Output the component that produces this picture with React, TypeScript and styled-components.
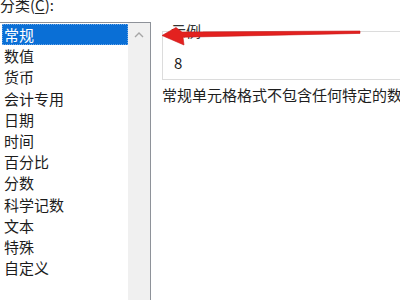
import React from "react"
import styled, { createGlobalStyle } from "styled-components"

const GlobalStyle = createGlobalStyle`
  html, body {
    margin: 0;
    padding: 0;
    background: #ffffff;
    overflow: hidden;
  }
  body {
    font-family: "Noto Sans CJK SC", "Liberation Sans", sans-serif;
    font-size: 15px;
    color: #1a1a1a;
  }
`

const Page = styled.div`
  position: relative;
  width: 400px;
  height: 300px;
  display: flex;
  gap: 11px;
  overflow: hidden;
`

const LeftColumn = styled.div`
  width: 151px;
  flex-shrink: 0;
  display: flex;
  flex-direction: column;
`

const FieldLabel = styled.div`
  margin-top: -5px;
  height: 20px;
  line-height: 20px;
  margin-bottom: 7px;
  color: #222;
  white-space: nowrap;
  u {
    text-decoration: underline;
    text-underline-offset: 2px;
  }
`

const ListBox = styled.div`
  flex: 1;
  display: flex;
  border: 1px solid #8e9299;
  border-bottom: none;
  margin-left: -1px;
`

const Items = styled.ul`
  list-style: none;
  margin: 0;
  padding: 1px 0 0 2px;
  flex: 1;
`

const Item = styled.li<{ $selected?: boolean }>`
  height: 21.2px;
  line-height: 21.2px;
  padding-left: 2px;
  white-space: nowrap;
  background: ${p => (p.$selected ? "#0a6fd6" : "transparent")};
  color: ${p => (p.$selected ? "#ffffff" : "#1c1c1c")};
  outline: ${p => (p.$selected ? "1px dotted #6aa6e8" : "none")};
  outline-offset: -1px;
`

const ScrollTrack = styled.div`
  width: 22px;
  background: #f0f0f0;
  display: flex;
  justify-content: center;
  padding-top: 9px;
  box-sizing: border-box;
`

const RightColumn = styled.div`
  flex: 1;
  min-width: 0;
  display: flex;
  flex-direction: column;
`

const GroupBox = styled.fieldset`
  margin: 23px -10px 0 0;
  padding: 14px 0 6px 11px;
  border: 1px solid #dcdcdc;
  min-width: 0;
`

const Legend = styled.legend`
  padding: 0 2px;
  margin-left: -5px;
  line-height: 16px;
  color: #333;
`

const Sample = styled.div`
  line-height: 20px;
  color: #1a1a1a;
`

const Description = styled.div`
  margin-top: 5px;
  line-height: 20px;
  white-space: nowrap;
  color: #1e1e1e;
`

const Overlay = styled.svg`
  position: absolute;
  left: 0;
  top: 0;
  pointer-events: none;
`

const categories = [
  "常规",
  "数值",
  "货币",
  "会计专用",
  "日期",
  "时间",
  "百分比",
  "分数",
  "科学记数",
  "文本",
  "特殊",
  "自定义",
]

export default function App() {
  return (
    <>
      <GlobalStyle />
      <Page>
        <LeftColumn>
          <FieldLabel>
            分类(<u>C</u>):
          </FieldLabel>
          <ListBox>
            <Items>
              {categories.map((c, i) => (
                <Item key={c} $selected={i === 0}>
                  {c}
                </Item>
              ))}
            </Items>
            <ScrollTrack>
              <svg width="10" height="6" viewBox="0 0 10 6">
                <path d="M1 5 L5 1 L9 5" fill="none" stroke="#a6a6a6" strokeWidth="1.4" />
              </svg>
            </ScrollTrack>
          </ListBox>
        </LeftColumn>
        <RightColumn>
          <GroupBox>
            <Legend>示例</Legend>
            <Sample>8</Sample>
          </GroupBox>
          <Description>常规单元格格式不包含任何特定的数字格式。</Description>
        </RightColumn>
        <Overlay width="400" height="300" viewBox="0 0 400 300">
          <polygon
            points="162,35.5 176,27.5 182,32 360,31 360,33.4 183,37.2 184,45"
            fill="#e3211f"
            stroke="#c8181a"
            strokeWidth="0.6"
            strokeLinejoin="round"
          />
        </Overlay>
      </Page>
    </>
  )
}
